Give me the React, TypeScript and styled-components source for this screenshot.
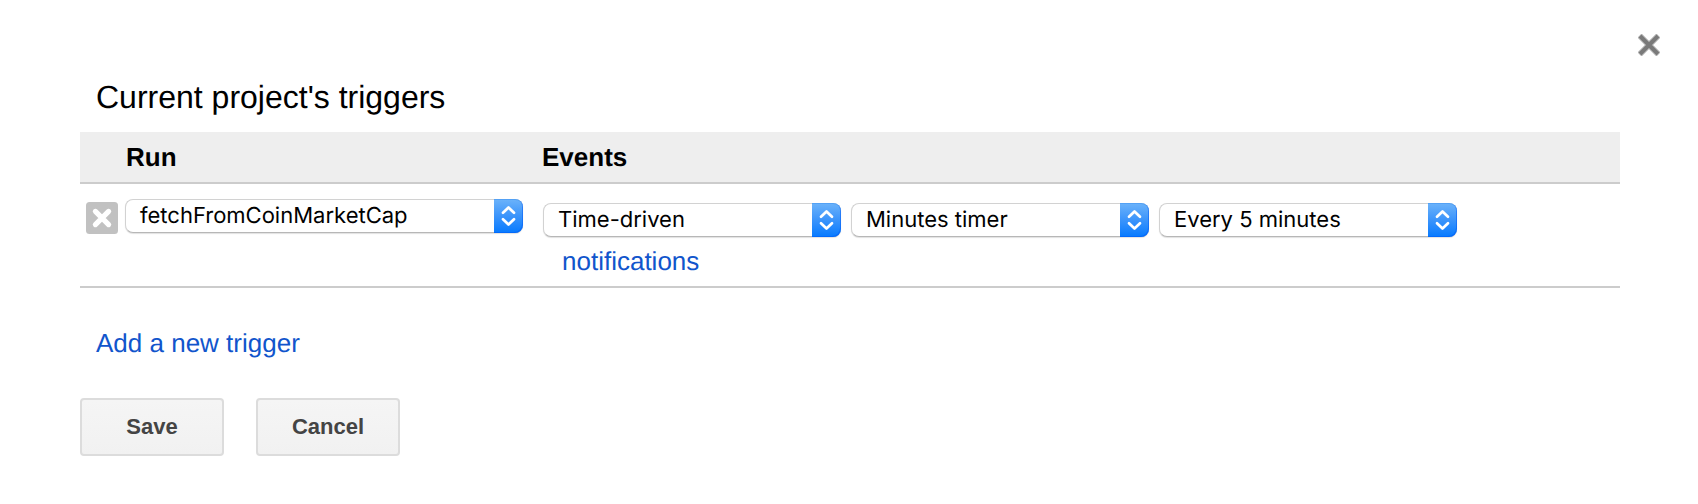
import React from "react";
import styled, { createGlobalStyle } from "styled-components";

const GlobalStyle = createGlobalStyle`
  *, *::before, *::after { box-sizing: border-box; }
  body {
    margin: 0;
    background: #fff;
    color: #000;
    font-family: Arial, "Liberation Sans", sans-serif;
    font-size: 26px;
    text-rendering: geometricPrecision;
  }
`;

const Dialog = styled.main`
  position: relative;
  display: flex;
  flex-direction: column;
  width: 1698px;
  height: 504px;
  padding: 78px 78px 48px 80px;
  background: #fff;
  overflow: hidden;
`;

const CloseButton = styled.button`
  position: absolute;
  top: 34px;
  right: 38px;
  width: 22px;
  height: 22px;
  padding: 0;
  border: 0;
  background: none;
  svg { display: block; }
`;

const Title = styled.h1`
  margin: 0;
  padding-left: 16px;
  height: 54px;
  font-size: 32px;
  font-weight: 400;
  line-height: 38px;
`;

const HeaderRow = styled.div`
  display: grid;
  grid-template-columns: 462px 1fr;
  height: 52px;
  align-items: center;
  background: #eee;
  border-bottom: 2px solid #ccc;
`;

const HeaderCell = styled.div<{ $indent?: number }>`
  padding-left: ${(p) => p.$indent ?? 0}px;
  font-weight: 700;
  line-height: 30px;
`;

const TriggerRow = styled.div`
  display: grid;
  grid-template-columns: 463px 1fr;
  height: 104px;
  border-bottom: 2px solid #ccc;
`;

const RunCell = styled.div`
  display: flex;
  align-items: flex-start;
  gap: 7px;
  padding: 15px 0 0 6px;
`;

const DeleteButton = styled.button`
  width: 32px;
  height: 32px;
  margin-top: 3px;
  padding: 0;
  border: 0;
  background: none;
  svg { display: block; }
`;

const EventsCell = styled.div`
  padding-top: 19px;
`;

const SelectGroup = styled.div`
  display: flex;
  gap: 10px;
`;

const SelectBox = styled.div<{ $width: number }>`
  display: flex;
  justify-content: space-between;
  width: ${(p) => p.$width}px;
  height: 34px;
  padding-left: 14px;
  border: 1px solid #d2d2d2;
  border-right: 0;
  border-bottom-color: #b7b7b7;
  border-radius: 8px;
  box-shadow: 0 1px 1px rgba(0, 0, 0, 0.12);
  background: #fff;
`;

const SelectLabel = styled.span`
  font-family: Inter, sans-serif;
  font-size: 22px;
  line-height: 32px;
  white-space: nowrap;
`;

const Stepper = styled.span`
  width: 29px;
  height: 34px;
  margin-top: -1px;
  border-radius: 0 8px 8px 0;
  background: linear-gradient(#6cb3fa, #3b94fb 50%, #067aff);
  box-shadow: inset 0 1px 0 rgba(40, 130, 235, 0.35), inset -1px -1px 0 rgba(0, 90, 245, 0.5);
  svg { display: block; }
`;

const TextLink = styled.a`
  color: #15c;
  text-decoration: none;
  line-height: 30px;
`;

const Notifications = styled.div`
  display: flex;
  padding: 9px 0 0 19px;
`;

const AddTrigger = styled.div`
  display: flex;
  padding: 40px 0 0 16px;
`;

const Actions = styled.div`
  display: flex;
  gap: 32px;
  margin-top: 40px;
`;

const ActionButton = styled.button`
  width: 144px;
  height: 58px;
  padding: 0 0 2px;
  border: 2px solid #dcdcdc;
  border-radius: 4px;
  background: linear-gradient(#f5f5f5, #f1f1f1);
  color: #444;
  font: 700 22px/54px Arial, "Liberation Sans", sans-serif;
  text-align: center;
`;

function Select({ label, width = 298 }: { label: string; width?: number }) {
  return (
    <SelectBox $width={width}>
      <SelectLabel>{label}</SelectLabel>
      <Stepper>
        <svg width="29" height="34" viewBox="0 0 29 34" fill="none" stroke="#fff" strokeWidth="2.7" strokeLinecap="round" strokeLinejoin="round">
          <path d="M9 13.8L14.5 8.5L20 13.8M9 20.2L14.5 25.5L20 20.2" />
        </svg>
      </Stepper>
    </SelectBox>
  );
}

export default function App() {
  return (
    <>
      <GlobalStyle />
      <Dialog>
        <CloseButton aria-label="Close">
          <svg width="22" height="22" viewBox="0 0 22 22" fill="none">
            <path d="M1.5 1.5L20.5 20.5M20.5 1.5L1.5 20.5" stroke="#bdbdbd" strokeWidth="6" />
            <path d="M2 2L20 20M20 2L2 20" stroke="#7a7a7a" strokeWidth="4" />
          </svg>
        </CloseButton>
        <Title>Current project's triggers</Title>
        <HeaderRow>
          <HeaderCell $indent={46}>Run</HeaderCell>
          <HeaderCell>Events</HeaderCell>
        </HeaderRow>
        <TriggerRow>
          <RunCell>
            <DeleteButton aria-label="Delete trigger">
              <svg width="32" height="32" viewBox="0 0 32 32">
                <rect width="32" height="32" rx="3.5" fill="#c1c1c1" />
                <path d="M9.4 9.4L22.6 22.6M22.6 9.4L9.4 22.6" stroke="#fff" strokeWidth="5.2" strokeLinecap="round" />
              </svg>
            </DeleteButton>
            <Select label="fetchFromCoinMarketCap" width={398} />
          </RunCell>
          <EventsCell>
            <SelectGroup>
              <Select label="Time-driven" />
              <Select label="Minutes timer" />
              <Select label="Every 5 minutes" />
            </SelectGroup>
            <Notifications>
              <TextLink>notifications</TextLink>
            </Notifications>
          </EventsCell>
        </TriggerRow>
        <AddTrigger>
          <TextLink>Add a new trigger</TextLink>
        </AddTrigger>
        <Actions>
          <ActionButton>Save</ActionButton>
          <ActionButton>Cancel</ActionButton>
        </Actions>
      </Dialog>
    </>
  );
}
